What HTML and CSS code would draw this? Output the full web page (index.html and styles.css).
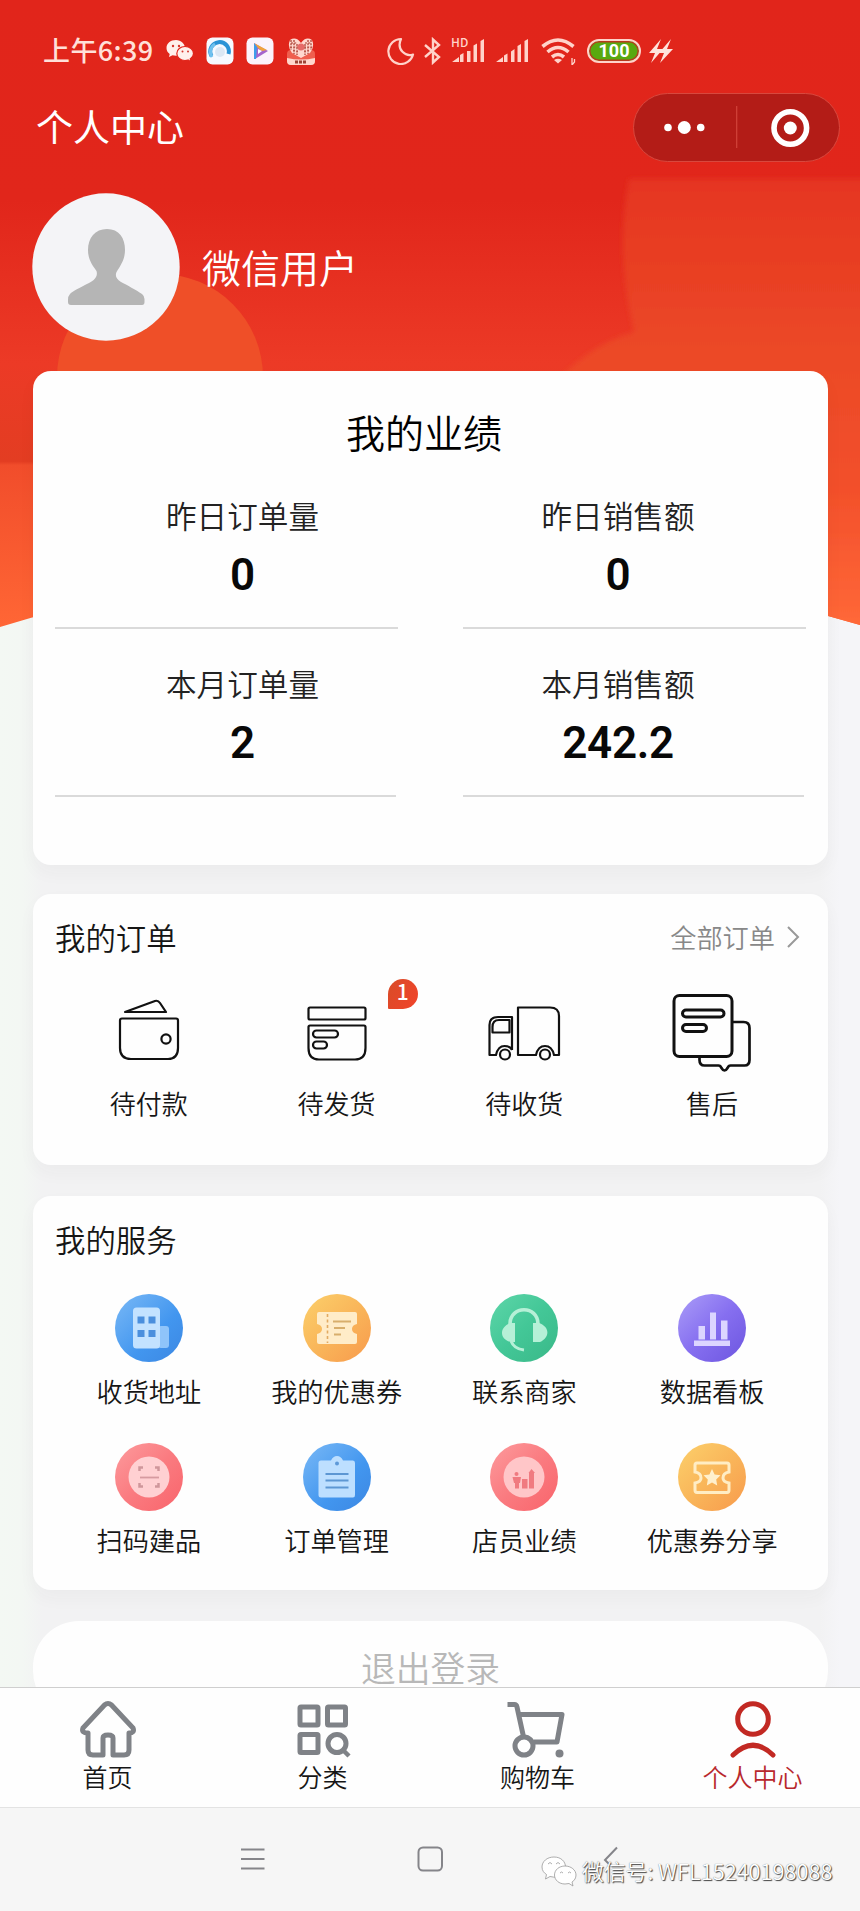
FILE: index.html
```html
<!DOCTYPE html>
<html lang="zh-CN">
<head>
<meta charset="utf-8">
<title>个人中心</title>
<link rel="stylesheet" href="styles.css">
</head>
<body>
<div class="phone">
  <svg class="backdrop" viewBox="0 0 860 640" width="860" height="640" aria-hidden="true">
    <defs>
      <linearGradient id="red" gradientUnits="userSpaceOnUse" x1="0" y1="0" x2="0" y2="626">
        <stop offset="0" stop-color="#e1251b"/><stop offset=".32" stop-color="#e1261b"/>
        <stop offset=".58" stop-color="#ec3a26"/><stop offset=".737" stop-color="#e33d22"/>
        <stop offset=".743" stop-color="#f14d2b"/><stop offset="1" stop-color="#ff6635"/>
      </linearGradient>
      <linearGradient id="glow" gradientUnits="userSpaceOnUse" x1="0" y1="178" x2="0" y2="626">
        <stop offset="0" stop-color="#e53521"/><stop offset=".42" stop-color="#ec4a27"/>
        <stop offset=".7" stop-color="#f3502b"/><stop offset="1" stop-color="#ff6838"/>
      </linearGradient>
      <filter id="soft" x="-5%" y="-5%" width="110%" height="110%"><feGaussianBlur stdDeviation="2.500"/></filter>
      <clipPath id="curve"><path d="M0 0H860V625Q430 496 0 627Z"/></clipPath>
    </defs>
    <g clip-path="url(#curve)">
      <path d="M0 0H860V640H0Z" fill="url(#red)"/>
      <circle cx="160" cy="377" r="103" fill="#ef4f28"/>
      <path d="M629 179H880V660H800V400H540Q585 345 634 332Q615 250 629 179Z" fill="url(#glow)" filter="url(#soft)"/>
    </g>
  </svg>

  <header class="status">
    <span class="clock">上午6:39</span>
    <svg class="s-wechat" width="28" height="24" viewBox="0 0 28 24"><path fill="#fff0ec" d="M10 1C4.500 1 .5 4.500.5 9c0 2.500 1.200 4.600 3.200 6L3 18l3.500-1.700c1 .3 2.300.5 3.500.5C15.500 16.800 19 13 19 9s-4-8-9-8z"/><path fill="#fff0ec" stroke="#e1251b" stroke-width="1.200" d="M19 7.500c-4.500 0-8.200 3-8.200 7s3.700 7 8.200 7c1 0 2-.2 3-.5l3 1.700-.8-2.800c2-1.200 3.300-3.200 3.300-5.400 0-4-3.800-7-8.500-7z"/><g fill="#d5362c"><circle cx="7" cy="7" r="1.200"/><circle cx="13" cy="7" r="1.200"/><circle cx="16.500" cy="12.500" r="1"/><circle cx="22" cy="12.500" r="1"/></g></svg>
    <svg class="s-app" width="28" height="28" viewBox="0 0 28 28"><rect x=".5" y=".5" width="27" height="27" rx="6" fill="#f6f9ff"/><path d="M5.500 19A9.300 9.300 0 1 1 22.500 17" fill="none" stroke="#2b93d6" stroke-width="4"/><path d="M6 20A9 9 0 0 1 9 7" fill="none" stroke="#6fc0ee" stroke-width="3"/><circle cx="14" cy="15" r="5" fill="#dbe7f4"/></svg>
    <svg class="s-app" width="28" height="28" viewBox="0 0 28 28"><rect x=".5" y=".5" width="27" height="27" rx="6" fill="#fbf3fb"/><path d="M8 6L22 14L9 22Z" fill="#a565cc"/><path d="M8 6L21 13L16 14L12 11Z" fill="#f0a33c"/><path d="M8 6L11 10L10 22H8Z" fill="#3e9dea"/><path d="M12 12L16 14L12 17Z" fill="#fff"/></svg>
    <svg class="s-app" width="30" height="28" viewBox="0 0 30 28"><rect x="1" y="13" width="28" height="15" rx="4" fill="#ef5f4e"/><path d="M4 3Q10-1 15 6Q20-1 26 3Q29 10 24 16L15 21L6 16Q1 10 4 3Z" fill="#ffd8cf"/><path d="M5 6H11M19 6H25M4 10H12M18 10H26M7 14H12M18 14H23M8 3V17M22 3V17M11 7V18M19 7V18M5 3V13M25 3V13" stroke="#a83a2c" stroke-width="1.200" stroke-dasharray="2 1.200"/><circle cx="15" cy="10" r="3.500" fill="#e66a67"/><path d="M1 21Q15 24 29 21V24Q29 28 25 28H5Q1 28 1 24Z" fill="#ffd7cc"/><path d="M9 25H21" stroke="#9d4536" stroke-width="3" stroke-dasharray="3 1"/></svg>
    <svg class="s-moon" width="28" height="28" viewBox="0 0 28 28" fill="none" stroke="#ffd3ca" stroke-width="2.200" stroke-linejoin="round"><path d="M14 2A12.500 12.500 0 1 0 26 17.500C19 20 9 13 14 2Z"/></svg>
    <svg class="s-bt" width="18" height="28" viewBox="0 0 18 28" fill="none" stroke="#ffd3ca" stroke-width="2.400"><path d="M1 8L15 20L9 25.500V2.500L15 8L1 20"/></svg>
    <svg class="s-sig" width="36" height="28" viewBox="0 0 36 28"><g fill="#ffd3ca"><path d="M0 25L7 20V25ZM8 18L11.500 16V25H8ZM15 14H18.500V25H15ZM21.500 8.500L25 6.500V25H21.500ZM28.500 4L32 2V25H28.500Z"/><text x="-1" y="10" class="hd">HD</text></g></svg>
    <svg class="s-sig2" width="34" height="28" viewBox="0 0 34 28"><path fill="#ffd3ca" d="M0 25L7 20V25ZM8 18.500L11.500 16.500V25H8ZM15 14.500L18.500 12V25H15ZM21.500 9L25 7V25H21.500ZM28.500 4L32 2V25H28.500Z"/></svg>
    <svg class="s-wifi" width="36" height="28" viewBox="0 0 36 28" fill="none" stroke="#ffd3ca" stroke-width="3.600"><path d="M1.500 9.500Q17-3.500 32.500 9.500M6.500 15Q17 6 27.500 15M11 20Q17 15 23 20"/><path d="M13 23Q17 20.500 21 23L17 26.500Z" fill="#ffd3ca" stroke="none"/><path d="M31 21V28L33.500 25V22" stroke-width="1.300"/></svg>
    <span class="battery">100</span>
    <svg class="s-bolt" width="24" height="26" viewBox="0 0 24 26" fill="#ffe3dc"><path d="M12 1L0 15H6L2 25L14 11H8ZM22 1L10 15H15L11 25L24 11H18Z"/></svg>
  </header>

  <div class="titlebar">
    <h1 class="page-title">个人中心</h1>
    <div class="capsule">
      <svg width="204" height="66" viewBox="0 0 204 66"><g fill="#fff"><circle cx="34" cy="33.500" r="3.800"/><circle cx="50.300" cy="33.500" r="6.500"/><circle cx="66.700" cy="33.500" r="3.800"/><circle cx="156.300" cy="34" r="6.500"/></g><path d="M102.700 12V54" stroke="#d2443a" stroke-width="1.200"/><circle cx="156.300" cy="34" r="16.300" fill="none" stroke="#fff" stroke-width="5.600"/></svg>
    </div>
  </div>

  <section class="profile">
    <svg class="avatar" width="148" height="148" viewBox="0 0 148 148"><circle cx="74" cy="74" r="73.700" fill="#f4f4f7"/><path fill="#b5b5b5" d="M75 36C63 36 56 45 56 57C56 67 61 73 64.500 78C66 83 63 87 57 90C47 95 41 98 38 101Q36 103 36 107V109Q36 112 39 112H110Q112.500 112 112.500 109V106Q112.500 103 110 101C104 97 95 92 89 89C84 86 83 83 84.500 79C89 72 93 66 93 57C93 45 87 36 75 36Z"/></svg>
    <span class="nickname">微信用户</span>
  </section>

  <main class="content">
    <section class="card stats">
      <h2 class="stats-title">我的业绩</h2>
      <div class="stats-grid">
        <div class="stat"><span class="stat-label">昨日订单量</span><strong class="stat-value">0</strong></div>
        <div class="stat"><span class="stat-label">昨日销售额</span><strong class="stat-value">0</strong></div>
        <div class="stat"><span class="stat-label">本月订单量</span><strong class="stat-value">2</strong></div>
        <div class="stat"><span class="stat-label">本月销售额</span><strong class="stat-value">242.2</strong></div>
      </div>
    </section>

    <section class="card orders">
      <div class="card-head"><h2>我的订单</h2><a class="more">全部订单<svg width="14" height="24" viewBox="0 0 14 24" fill="none" stroke="#999" stroke-width="2"><path d="M2 2L12 12L2 22"/></svg></a></div>
      <div class="row">
        <div class="order"><svg width="80" height="80" viewBox="0 0 80 80" fill="none" stroke="#111" stroke-width="2.200" stroke-linejoin="round"><path d="M16 31L46 20Q49 19 51 22L57 31Z"/><path d="M13 37.500H67Q69 37.500 69 39.500V67Q69 78 59 78H22Q11 78 11 67V39.500Q11 37.500 13 37.500Z"/><circle cx="57" cy="58" r="4.600"/></svg><span>待付款</span></div>
        <div class="order"><svg width="80" height="80" viewBox="0 0 80 80" fill="none" stroke="#111" stroke-width="2.200"><rect x="11.500" y="26.500" width="57" height="12" rx="1.500"/><path d="M13 44.500H67Q68.500 44.500 68.500 46V67Q68.500 78.500 58 78.500H22Q11.500 78.500 11.500 67V46Q11.500 44.500 13 44.500Z"/><rect x="16" y="49.500" width="25" height="7" rx="3.500"/><rect x="16" y="60.500" width="14" height="7" rx="3.500"/></svg><span>待发货</span><b class="badge">1</b></div>
        <div class="order"><svg width="80" height="80" viewBox="0 0 80 80" fill="none" stroke="#111" stroke-width="2.200" stroke-linejoin="round"><path d="M34 26.500H66Q75 26.500 75 35V74H70Q68 65 61 65Q54 65 52 74H34Z"/><path d="M28 69Q26 65 20.500 65Q14 65 12 74H5.500V44Q5.500 36 14 36H28V69"/><path d="M8.500 51.500V46Q8.500 39 15 39H25.500V51.500Z"/><circle cx="21" cy="73.500" r="5"/><circle cx="61" cy="73.500" r="5"/></svg><span>待收货</span></div>
        <div class="order"><svg class="tall" width="80" height="90" viewBox="3.500 0 80 90" fill="none" stroke="#111" stroke-width="3" stroke-linejoin="round"><rect x="5.500" y="14.500" width="58" height="61" rx="5.500"/><rect x="14" y="29" width="41.500" height="7" rx="3.500"/><rect x="14" y="43.500" width="24" height="7" rx="3.500"/><path d="M64 41H75Q81 41 81 47V79Q81 84.500 76 84.500H62Q60 84.500 59 87Q56 92 53 87Q52 84.500 50 84.500H36Q31 84.500 31 79V76" stroke-width="2.700"/></svg><span>售后</span></div>
      </div>
    </section>

    <section class="card services">
      <div class="card-head"><h2>我的服务</h2></div>
      <div class="service-grid">
        <div class="service"><span class="disc blue"><svg viewBox="0 0 68 68"><rect x="43" y="32" width="11" height="22" rx="3" fill="#8fc4fa"/><rect x="18" y="13.500" width="27" height="41" rx="3.500" fill="#c3e2ff"/><path fill="#4b8fdd" d="M22.500 22.500h7v7h-7zM33.500 22.500h7v7h-7zM22.500 36h7v7h-7zM33.500 36h7v7h-7z"/></svg></span><span>收货地址</span></div>
        <div class="service"><span class="disc orange"><svg viewBox="0 0 68 68"><path fill="#ffecc8" d="M16 18H52Q54 18 54 20V30Q49 31 49 35Q49 39 54 40V48Q54 50 52 50H16Q14 50 14 48V40Q19 39 19 35Q19 31 14 30V20Q14 18 16 18Z"/><path d="M24.500 20V49" stroke="#e1aa62" stroke-width="1.600" stroke-dasharray="3 2.500"/><path d="M30 27.500H48M31 34H42M31 40.500H38" stroke="#d8ae6c" stroke-width="1.800"/></svg></span><span>我的优惠券</span></div>
        <div class="service"><span class="disc green"><svg viewBox="0 0 68 68"><path d="M20 35V30C20 11 48 11 48 30V35" fill="none" stroke="#b6f0d7" stroke-width="3.600"/><path d="M25 29V48H21C9 45 9 33 21 29ZM43 29H49C60 33 60 43 50 48H43Z" fill="#b6f0d7"/><path d="M21 47Q24 55 34 56" fill="none" stroke="#b6f0d7" stroke-width="3"/></svg></span><span>联系商家</span></div>
        <div class="service"><span class="disc purple"><svg viewBox="0 0 68 68"><path fill="#dcd5ff" d="M20.500 32H27V45.500H20.500ZM32 18.500H38V45.500H32ZM43 26.500H49.500V45.500H43ZM16 46.500H52V52H16Z"/></svg></span><span>数据看板</span></div>
        <div class="service"><span class="disc pink"><svg viewBox="0 0 68 68"><circle cx="34" cy="34" r="20.500" fill="#ffd0d2"/><path d="M24.500 28V24.500H28M40 24.500H43.500V28M43.500 40V43.500H40M28 43.500H24.500V40" fill="none" stroke="#cf969b" stroke-width="2.500"/><path d="M25 34.500H44" stroke="#d69ba0" stroke-width="1.800"/></svg></span><span>扫码建品</span></div>
        <div class="service"><span class="disc blue"><svg viewBox="0 0 68 68"><path fill="#bddfff" d="M18 17.500H28Q30 13 34 13Q38 13 40 17.500H50Q52 17.500 52 20V52Q52 54.500 50 54.500H18Q15.500 54.500 15.500 52V20Q15.500 17.500 18 17.500Z"/><circle cx="34" cy="20.500" r="2" fill="#5e99d8"/><path d="M22.500 31H45.500M22.500 37.500H45.500M22.500 44.500H45.500" stroke="#5d97d3" stroke-width="2"/></svg></span><span>订单管理</span></div>
        <div class="service"><span class="disc pink"><svg viewBox="0 0 68 68"><circle cx="34" cy="34" r="20.500" fill="#ffc6c8"/><path fill="#f07a80" d="M22.500 34H31L30 40H29V45.500H25V40H24ZM32 36H37.500V45.500H32ZM38.500 30L41.500 26L45 30H44V45.500H39V30Z"/><circle cx="26.500" cy="31" r="2" fill="#f07a80"/></svg></span><span>店员业绩</span></div>
        <div class="service"><span class="disc orange"><svg viewBox="0 0 68 68"><path d="M19 20H49Q51 20 51 22V29Q45 30 45 35Q45 39 51 40V47Q51 49.500 49 49.500H19Q17 49.500 17 47V40Q23 39 23 35Q23 30 17 29V22Q17 20 19 20Z" fill="none" stroke="#ffedc4" stroke-width="3"/><path fill="#fff0cd" d="M34 26L36.600 31.500L42.500 32.300L38.200 36.400L39.200 42.400L34 39.600L28.800 42.400L29.800 36.400L25.500 32.300L31.400 31.500Z"/></svg></span><span>优惠券分享</span></div>
      </div>
    </section>

    <button class="logout">退出登录</button>
  </main>

  <nav class="tabs">
    <a class="tab"><svg width="64" height="64" viewBox="0 0 64 64" fill="none" stroke="#7f8287" stroke-width="5" stroke-linejoin="round"><path d="M28.500 9Q32 6 35.500 9L57 32Q59 37 53 37V54Q53 59 48 59H37V42Q37 39 32 39Q27 39 27 42V59H17Q12 59 12 54V37Q5 37 7 32Z"/></svg><span>首页</span></a>
    <a class="tab"><svg width="64" height="64" viewBox="0 0 64 64" fill="none" stroke="#7f8287" stroke-width="5"><rect x="9" y="11" width="18" height="18" rx="1"/><rect x="36.500" y="11" width="18" height="18" rx="1"/><rect x="9" y="38.500" width="18" height="18" rx="1"/><circle cx="46" cy="47.500" r="9"/><path d="M52 54L58 60" stroke-width="4.500"/></svg><span>分类</span></a>
    <a class="tab"><svg width="64" height="64" viewBox="0 0 64 64" fill="none" stroke="#7f8287" stroke-width="5" stroke-linejoin="round"><path d="M1.500 8.500H8.500Q10.500 8.500 11 11L18 43"/><path d="M13 18.500H56L51 46H28"/><circle cx="18" cy="50" r="9"/><circle cx="53.500" cy="57.500" r="4" fill="#7f8287" stroke="none"/></svg><span>购物车</span></a>
    <a class="tab active"><svg width="64" height="64" viewBox="0 0 64 64" fill="none" stroke="#c22923" stroke-width="5" stroke-linecap="round"><circle cx="32" cy="23" r="15.300"/><path d="M12 59Q32 39.500 52 59"/></svg><span>个人中心</span></a>
  </nav>

  <footer class="sysnav">
    <svg class="keys" width="860" height="103" viewBox="0 0 860 103" fill="none" stroke="#85858a" stroke-width="2"><path d="M241 41.500H264.500M241 51H264.500M241 60.500H264.500"/><rect x="418.500" y="39.500" width="23.500" height="23" rx="4.500"/><path d="M617 39.500L605 52L609 56"/></svg>
    <div class="watermark">
      <svg width="36" height="32" viewBox="0 0 36 32" fill="#fff" stroke="#999" stroke-width=".8"><path d="M13 2C6 2 1 6.500 1 12C1 15.500 3 18 5.500 19.500L4.500 24L9 21.500Q13 22.500 16 22C21 20 24.500 17 24.500 12C24.500 6.500 20 2 13 2Z"/><path d="M24 11C18 11 13.500 15 13.500 20C13.500 25 18 29 24 29L28 28.500L32 31L31 27C33.500 25.500 35 23 35 20C35 15 30 11 24 11Z"/><path d="M7 9Q9 6 11 9M15 9Q17 6 19 9M19 18Q20.500 16 22 18M27 18Q28.500 16 30 18" fill="none"/></svg>
      <span>微信号: WFL15240198088</span>
    </div>
  </footer>
</div>
</body>
</html>
```
FILE: styles.css
```css
* { box-sizing: border-box; }
body { margin: 0; font-family: "Noto Sans CJK SC", sans-serif; font-weight: 350; color: #161616; }
h1, h2 { margin: 0; font-weight: inherit; }
svg { display: block; flex: none; }
.phone {
  position: relative; display: flex; flex-direction: column;
  width: 860px; height: 1911px; overflow: hidden;
  background: linear-gradient(90deg, #f3f8f3 0, #f3f7f3 22px, #f2f2f3 42px, #f2f2f3 820px, #f5f5f8 840px);
}
.backdrop { position: absolute; left: 0; top: 0; }
.status, .titlebar, .profile, .content, .tabs, .sysnav { position: relative; flex: none; }

.status { display: flex; align-items: center; height: 84px; padding: 18px 0 0 43px; }
.clock { width: 123px; font-size: 27px; line-height: 30px; font-weight: 500; color: #ffe0d9; white-space: nowrap; padding-bottom: 2px; letter-spacing: .4px; }
.s-app { margin-left: 12px; }
.s-moon { margin-left: 71px; }
.s-bt { margin-left: 9px; }
.s-sig { margin-left: 10px; overflow: visible; }
.s-sig2 { margin-left: 8px; }
.s-wifi { margin-left: 11px; }
.hd { font: 500 12px "Noto Sans CJK SC", sans-serif; }
.battery {
  width: 54px; height: 24px; margin-left: 10px; border: 2px solid #ffd3ca; border-radius: 12px;
  background: #58a90f; box-shadow: inset 0 0 0 1.500px #b63a1d; color: #fff;
  font: 700 18px/20px Roboto, sans-serif; text-align: center;
}
.s-bolt { margin-left: 8px; }

.titlebar { display: flex; align-items: center; justify-content: space-between; height: 88px; padding: 0 20px 0 36px; }
.page-title { font-size: 37px; line-height: 48px; font-weight: 400; color: #fff; padding-bottom: 4px; }
.capsule { width: 207px; height: 69px; border: 1px solid #d8483e; border-radius: 35px; background: #b31c17; margin-top: -2px; }

.profile { display: flex; align-items: flex-start; height: 199px; padding: 21px 0 0 32px; }
.nickname { margin: 46px 0 0 22px; font-size: 39px; line-height: 54px; color: #fff; }

.content { height: 1316px; padding: 0 32px 0 33px; overflow: hidden; }
.card { border-radius: 18px; background: #fefefe; box-shadow: 0 8px 18px rgba(60, 50, 60, .035); }
.stats { height: 494px; padding: 32px 22px 0; }
.stats-title { font-size: 39px; line-height: 56px; text-align: center; color: #000; padding-right: 13px; }
.stats-grid { display: grid; grid-template-columns: 343px 343px; column-gap: 65px; margin-top: 38px; }
.stat { display: flex; flex-direction: column; align-items: center; height: 168px; padding-left: 32px; position: relative; }
.stat:nth-child(even) { padding: 0 33px 0 0; }
.stat::after { content: ""; position: absolute; left: 0; right: 0; bottom: 36px; height: 2px; background: #dadada; }
.stat:nth-child(n+3)::after { right: 2px; }
.stat-label { font-size: 30.600px; line-height: 36px; color: #222; }
.stat-value { margin-top: 16px; font: 600 44px/52px Roboto, sans-serif; letter-spacing: -.3px; color: #080808; }

.orders { height: 271px; margin-top: 29px; padding: 20px 22px 0; }
.card-head { display: flex; justify-content: space-between; align-items: center; height: 46px; }
.card-head h2 { font-size: 30.400px; line-height: 44px; }
.more { display: flex; align-items: center; gap: 11px; font-size: 26.200px; line-height: 40px; color: #888; padding-right: 6px; }
.row { display: grid; grid-template-columns: repeat(4, 1fr); margin-top: 21px; }
.order { position: relative; display: flex; flex-direction: column; align-items: center; font-size: 26px; line-height: 34px; }
.order > span { margin-top: 25px; }
.tall { margin-bottom: -10px; overflow: visible; }
.badge {
  position: absolute; left: 145px; top: -2px; width: 30px; height: 30px;
  border-radius: 15px 15px 15px 1px; background: linear-gradient(120deg, #d84c28, #f2432a);
  color: #fff; font: 500 21px/25px "Noto Sans CJK SC", sans-serif; text-align: center;
}

.services { height: 394px; margin-top: 31px; padding: 20px 22px 0; }
.service-grid { display: grid; grid-template-columns: repeat(4, 1fr); row-gap: 31px; margin-top: 32px; }
.service { display: flex; flex-direction: column; align-items: center; height: 118px; font-size: 26.200px; line-height: 34px; white-space: nowrap; }
.disc { width: 68px; height: 68px; border-radius: 50%; margin-bottom: 12px; flex: none; }
.blue { background: linear-gradient(135deg, #7ab9f6, #4296ef 60%, #3c87e2); }
.orange { background: linear-gradient(135deg, #fcd06b, #f9b65a 50%, #f89a4c); }
.green { background: linear-gradient(135deg, #5ed6a9, #43c797 50%, #3ab888); }
.purple { background: linear-gradient(135deg, #ab9df8, #866ff0 50%, #6c55df); }
.pink { background: linear-gradient(135deg, #fd9b9d, #fa7b80 50%, #f9646b); }

.logout {
  display: block; width: 100%; height: 96px; margin-top: 31px; padding: 0 0 5px; border: 0; border-radius: 46px;
  background: #fefefe; color: #b8b8b8; font: 350 34.800px/36px "Noto Sans CJK SC", sans-serif;
}

.tabs { display: grid; grid-template-columns: repeat(4, 1fr); height: 121px; border-top: 1px solid #cfcfcf; border-bottom: 1px solid #e3e3e3; background: #fefefe; }
.tab { display: flex; flex-direction: column; align-items: center; padding-top: 8px; font-size: 25px; line-height: 30px; }
.tab span { margin-top: 1px; }
.active { color: #b8282c; }

.sysnav { display: flex; height: 103px; background: #f6f6f6; }
.watermark { position: absolute; left: 541px; top: 47px; display: flex; align-items: center; gap: 5px; color: #fff; font-size: 21.800px; line-height: 32px; white-space: nowrap; text-shadow: 1px 1px 1px #444, 0 0 1px #666; }
```
